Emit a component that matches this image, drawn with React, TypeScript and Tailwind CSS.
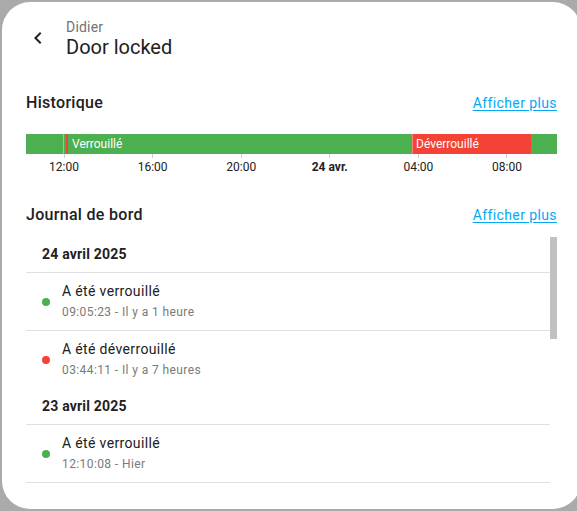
import React from "react";

const font = { fontFamily: "Roboto, 'Noto Sans', sans-serif" };

function DateHeader({ label }: { label: string }) {
  return (
    <div className="h-[36px] flex items-center pl-4 border-b border-[#e0e0e0] text-[14px] font-bold text-[#212121] tracking-[0.2px]">
      {label}
    </div>
  );
}

function Entry({
  title,
  sub,
  color,
  border,
}: {
  title: string;
  sub: string;
  color: string;
  border: boolean;
}) {
  return (
    <div
      className={`h-[58px] flex items-stretch pl-4 ${border ? "border-b border-[#e0e0e0]" : ""}`}
    >
      <div className={`self-center w-2 h-2 rounded-full shrink-0 ${color}`} />
      <div className="ml-3 pt-[8px] flex flex-col">
        <div className="text-[14px] leading-[20px] text-[#212121] tracking-[0.35px]">{title}</div>
        <div className="mt-[3px] text-[12px] leading-[16px] text-[#7a7a7a] tracking-[0.4px]">{sub}</div>
      </div>
    </div>
  );
}

export default function App() {
  const ticks = [
    { t: "12:00", b: false },
    { t: "16:00", b: false },
    { t: "20:00", b: false },
    { t: "24 avr.", b: true },
    { t: "04:00", b: false },
    { t: "08:00", b: false },
  ];
  return (
    <div className="w-[577px] h-[511px] overflow-hidden bg-[#aaaaaa] pt-[2px] pl-[2px]" style={font}>
      <div className="w-[579px] h-[507px] bg-white rounded-[28px] flex flex-col overflow-hidden">
        {/* header */}
        <div className="h-[72px] flex items-center pl-[12px] shrink-0">
          <div className="w-[48px] h-[48px] flex items-center justify-center">
            <svg width="24" height="24" viewBox="0 0 24 24">
              <path
                d="M15.41,16.58L10.83,12L15.41,7.41L14,6L8,12L14,18L15.41,16.58Z"
                fill="#212121"
              />
            </svg>
          </div>
          <div className="ml-[4px] flex flex-col">
            <div className="text-[14px] leading-[18px] text-[#727272] tracking-[0.2px]">Didier</div>
            <div className="text-[20px] leading-[22px] text-[#212121]">Door locked</div>
          </div>
        </div>

        <div className="pl-[24px] w-[555px] flex flex-col">
          {/* Historique */}
          <div className="mt-[17px] h-[24px] flex items-center justify-between">
            <div className="text-[16px] font-medium text-[#212121] tracking-[0.3px]">Historique</div>
            <div className="text-[14px] text-[#03a9f4] underline underline-offset-2 tracking-[0.4px]">Afficher plus</div>
          </div>

          {/* timeline */}
          <div className="mt-[19px] h-[20px] flex text-white text-[12px] leading-[20px]">
            <div className="w-[37px] bg-[#4caf50]" />
            <div className="w-[1px] bg-[#8fcf92]" />
            <div className="w-[2px] bg-[#4caf50]" />
            <div className="w-[2px] bg-[#f44336]" />
            <div className="w-[344px] bg-[#4caf50] pl-[4px] whitespace-nowrap">Verrouillé</div>
            <div className="w-[119px] bg-[#f44336] border-l border-[#f7857c] pl-[3px] whitespace-nowrap">Déverrouillé</div>
            <div className="flex-1 bg-[#4caf50]" />
          </div>
          <div className="h-[5px] flex pl-[38px] gap-[88.6px]">
            {ticks.map((k) => (
              <div key={k.t} className="w-0 flex justify-center">
                <div className="w-[1px] h-[4px] bg-[#d0d0d0] shrink-0" />
              </div>
            ))}
          </div>
          <div className="h-[16px] flex pl-[38px] gap-[88.6px]">
            {ticks.map((k) => (
              <div key={k.t} className="w-0 flex justify-center">
                <div
                  className={`shrink-0 whitespace-nowrap text-[12px] leading-[16px] text-[#212121] ${k.b ? "font-bold" : ""}`}
                >
                  {k.t}
                </div>
              </div>
            ))}
          </div>

          {/* Journal */}
          <div className="mt-[28px] h-[24px] flex items-center justify-between">
            <div className="text-[16px] font-medium text-[#212121] tracking-[0.3px]">Journal de bord</div>
            <div className="text-[14px] text-[#03a9f4] underline underline-offset-2 tracking-[0.4px]">Afficher plus</div>
          </div>

          <div className="mt-[10px] h-[262px] flex">
            <div className="flex-1 flex flex-col">
              <DateHeader label="24 avril 2025" />
              <Entry title="A été verrouillé" sub="09:05:23 - Il y a 1 heure" color="bg-[#4caf50]" border />
              <Entry title="A été déverrouillé" sub="03:44:11 - Il y a 7 heures" color="bg-[#f44336]" border={false} />
              <DateHeader label="23 avril 2025" />
              <Entry title="A été verrouillé" sub="12:10:08 - Hier" color="bg-[#4caf50]" border />
            </div>
            <div className="w-[7px] flex flex-col">
              <div className="h-[102px] bg-[#c1c1c1]" />
            </div>
          </div>
        </div>
      </div>
    </div>
  );
}
